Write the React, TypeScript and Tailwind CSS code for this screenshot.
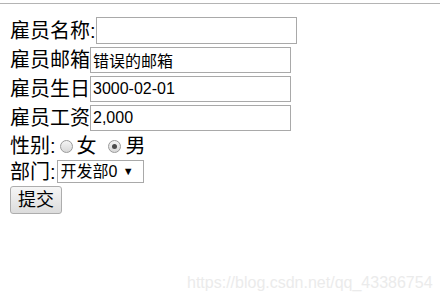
import React from "react";

function Radio({ checked }: { checked?: boolean }) {
  return (
    <span className="relative inline-flex w-[13px] h-[13px] rounded-full border border-[#9a9a9a] bg-gradient-to-b from-[#f4f4f4] to-[#d8d8d8] items-center justify-center shrink-0">
      {checked && <span className="w-[5px] h-[5px] rounded-full bg-[#4a4a4a]" />}
    </span>
  );
}

function Field({ label, value, h = "h-[29px]", ih = "h-[26px]" }: { label: string; value: string; h?: string; ih?: string }) {
  return (
    <div className={`flex items-center ${h}`}>
      <span className="leading-none whitespace-nowrap">{label}</span>
      <input
        readOnly
        value={value}
        className={`w-[201px] ${ih} border border-[#a9a9a9] px-[2px] text-[16px] text-black outline-none bg-white`}
        style={{ fontFamily: '"Liberation Sans", "Noto Sans CJK SC", sans-serif' }}
      />
    </div>
  );
}

export default function App() {
  return (
    <div
      className="relative w-[440px] h-[301px] bg-white overflow-hidden text-black"
      style={{ fontFamily: '"Liberation Sans", "Noto Sans CJK SC", sans-serif' }}
    >
      <div className="pt-[3px]">
        <div className="h-px bg-[#b4b4b4]" />
      </div>
      <div className="pl-[10px] pt-[12px] flex flex-col text-[20px]">
        <Field label="雇员名称:" value="" ih="h-[27px]" />
        <Field label="雇员邮箱" value="错误的邮箱" />
        <Field label="雇员生日" value="3000-02-01" />
        <Field label="雇员工资" value="2,000" h="h-[30px]" />
        <div className="flex items-center h-[26px]">
          <span className="leading-none">性别:</span>
          <span className="ml-[4px] flex items-center"><Radio /></span>
          <span className="ml-[4px] leading-none">女</span>
          <span className="ml-[11px] flex items-center"><Radio checked /></span>
          <span className="ml-[5px] leading-none">男</span>
        </div>
        <div className="flex items-center h-[25px]">
          <span className="leading-none">部门:</span>
          <div className="ml-px w-[87px] h-[23px] border border-[#a9a9a9] flex items-center pl-[3px] pr-[9px] text-[16px] bg-white">
            <span className="leading-none">开发部0</span>
            <span className="ml-auto text-[11px] leading-none">▼</span>
          </div>
        </div>
        <div className="mt-[2px] flex">
          <button className="w-[52px] h-[28px] border border-[#adadad] rounded-[3px] bg-gradient-to-b from-[#f6f6f6] to-[#dcdcdc] text-[18px] leading-none flex items-center justify-center text-black">
            提交
          </button>
        </div>
      </div>
      <div className="absolute left-[187px] top-[275px] text-[16px] leading-none text-[#ebebeb] whitespace-nowrap">
        https://blog.csdn.net/qq_43386754
      </div>
    </div>
  );
}
